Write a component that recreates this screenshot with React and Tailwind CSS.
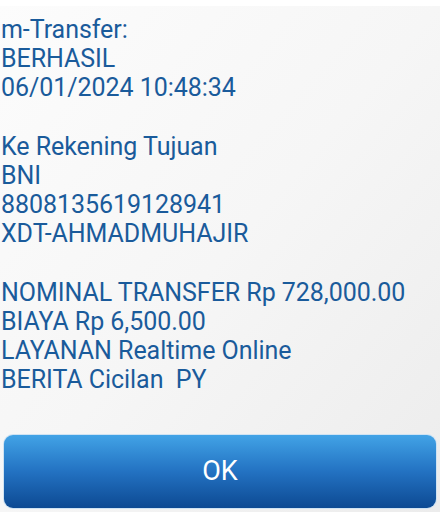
export default function App() {
  const lines = [
    "m-Transfer:",
    "BERHASIL",
    "06/01/2024 10:48:34",
    "",
    "Ke Rekening Tujuan",
    "BNI",
    "8808135619128941",
    "XDT-AHMADMUHAJIR",
    "",
    "NOMINAL TRANSFER Rp 728,000.00",
    "BIAYA Rp 6,500.00",
    "LAYANAN Realtime Online",
    "BERITA Cicilan\u00a0 PY",
  ];
  return (
    <div className="w-[440px] h-[512px] bg-white overflow-hidden" style={{ fontFamily: "Roboto, 'Noto Sans', sans-serif" }}>
      <div className="mt-[6px] h-[506px] bg-gradient-to-br from-[#fcfcfc] via-[#f6f6f6] to-[#ececec] flex flex-col">
        <div className="pt-[9px] pl-[1px] text-[25px] leading-[29.2px] text-[#1a5b9b] tracking-[-0.05px]">
          {lines.map((l, i) => (
            <div key={i} className="h-[29.2px] whitespace-pre">{l}</div>
          ))}
        </div>
        <div className="mt-auto mb-[3px] mx-[3px] p-[1px] rounded-[10px] bg-[#cfe3f3]">
          <div className="h-[73px] rounded-[9px] bg-gradient-to-b from-[#42a3e6] via-[#2372c2] to-[#0d4a93] flex items-center justify-center text-white text-[27px]">
            OK
          </div>
        </div>
      </div>
    </div>
  );
}
